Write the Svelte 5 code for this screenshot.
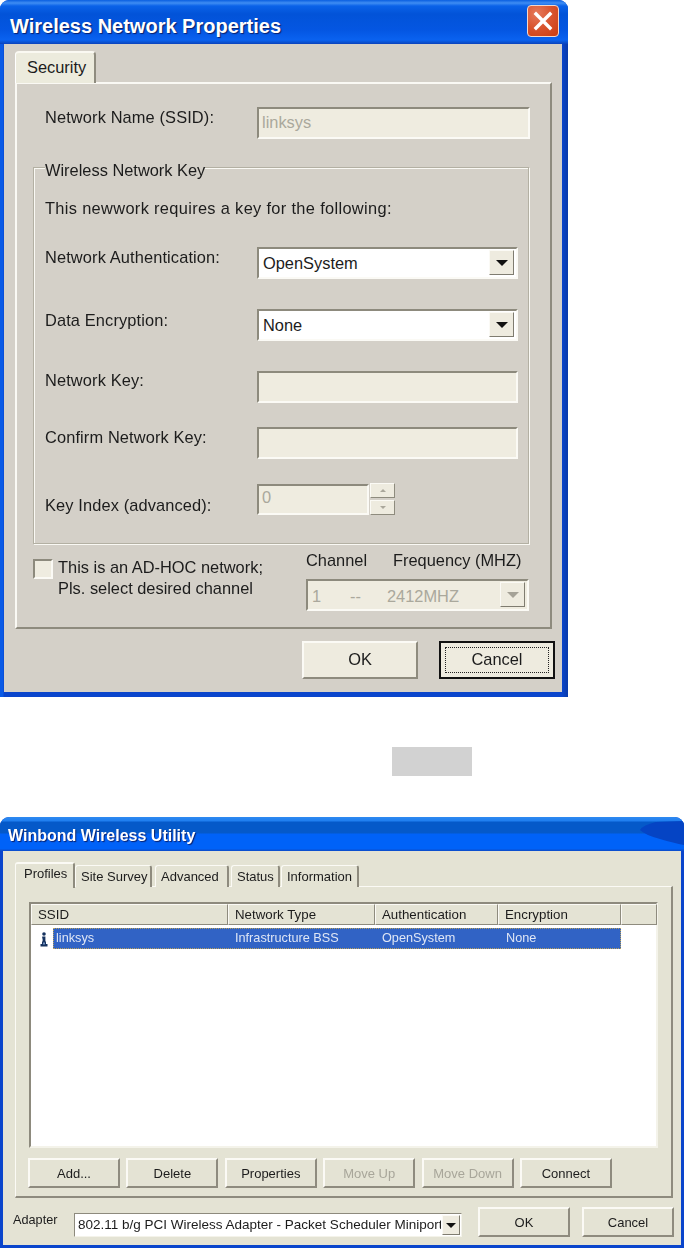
<script>
  const tabs = [
    { label: 'Site Survey', w: 77, gap: 3 },
    { label: 'Advanced', w: 74, gap: 2 },
    { label: 'Status', w: 49, gap: 1 },
    { label: 'Information', w: 78, gap: 0 }
  ];
  const cols = ['SSID', 'Network Type', 'Authentication', 'Encryption', ''];
  const actions = [
    { label: 'Add...', off: false },
    { label: 'Delete', off: false },
    { label: 'Properties', off: false },
    { label: 'Move Up', off: true },
    { label: 'Move Down', off: true },
    { label: 'Connect', off: false }
  ];
</script>

<div class="page">
  <section class="win one">
    <header class="title">
      <h1>Wireless Network Properties</h1>
      <button class="close" aria-label="Close">
        <svg viewBox="0 0 20 20" width="20" height="20"><path d="M3 3 L17 17 M17 3 L3 17" stroke="#fff" stroke-width="3.4" stroke-linecap="square" fill="none"/></svg>
      </button>
    </header>
    <div class="body">
      <div class="tab-one">Security</div>
      <div class="panel-one">
        <div class="row ssid">
          <span class="lab">Network Name (SSID):</span>
          <div class="field w273 off">linksys</div>
        </div>
        <div class="group">
          <div class="legend">Wireless Network Key</div>
          <p class="lead">This newwork requires a key for the following:</p>
          <div class="row r-auth">
            <span class="lab">Network Authentication:</span>
            <div class="field w261 sel">OpenSystem<span class="drop"><i></i></span></div>
          </div>
          <div class="row r-enc">
            <span class="lab">Data Encryption:</span>
            <div class="field w261 sel">None<span class="drop"><i></i></span></div>
          </div>
          <div class="row r-key">
            <span class="lab">Network Key:</span>
            <div class="field w261 off"></div>
          </div>
          <div class="row r-conf">
            <span class="lab">Confirm Network Key:</span>
            <div class="field w261 off"></div>
          </div>
          <div class="row r-idx">
            <span class="lab idx">Key Index (advanced):</span>
            <div class="field w112 off">0</div>
            <div class="spin">
              <span><i class="up"></i></span>
              <span><i class="down"></i></span>
            </div>
          </div>
        </div>
        <div class="adhoc">
          <span class="check"></span>
          <p class="adhoc-text">This is an AD-HOC network;<br />Pls. select desired channel</p>
          <div class="chan">
            <div class="chan-head"><span>Channel</span><span>Frequency (MHZ)</span></div>
            <div class="field w223 off dis">
              <span class="c1">1</span><span class="c2">--</span><span class="c3">2412MHZ</span>
              <span class="drop"><i class="gray"></i></span>
            </div>
          </div>
        </div>
      </div>
      <div class="foot-one">
        <button class="btn big">OK</button>
        <button class="btn big focus"><span>Cancel</span></button>
      </div>
    </div>
  </section>

  <div class="chip"></div>

  <section class="win two">
    <header class="title2">
      <svg class="blob" viewBox="0 0 44 24" width="44" height="24" aria-hidden="true">
        <path d="M44 0 L16 1 Q3 4 0 9 Q5 14 20 18 Q34 22 44 24 Z" fill="#0544c4"/>
      </svg>
      <h2>Winbond Wireless Utility</h2>
    </header>
    <div class="body2">
      <div class="tabs">
        <div class="tab active">Profiles</div>
        {#each tabs as t}
          <div class="tab" style="width:{t.w}px;margin-right:{t.gap}px">{t.label}</div>
        {/each}
      </div>
      <div class="panel-two">
        <div class="list">
          <div class="heads">
            {#each cols as c}<div class="head">{c}</div>{/each}
          </div>
          <div class="item">
            <svg class="ico" viewBox="0 0 8 15" width="8" height="15" aria-hidden="true">
              <circle cx="4" cy="2" r="1.8" fill="#16335f"/>
              <path d="M2.2 4.6 H5.4 V9.5 H6 V12 H7.5 V14.6 H0.5 V12 H2 V9.5 H2.6 V6.4 H2.2 Z" fill="#16335f"/>
              <path d="M3 10.5 H5 V12.5 H3 Z" fill="#6f8fc0"/>
            </svg>
            <div class="sel-row">
              <span class="a">linksys</span>
              <span class="b">Infrastructure BSS</span>
              <span class="c">OpenSystem</span>
              <span class="d">None</span>
            </div>
          </div>
        </div>
        <div class="actions">
          {#each actions as a}
            <button class="btn small" class:muted={a.off}>{a.label}</button>
          {/each}
        </div>
      </div>
      <div class="foot-two">
        <span class="adapter">Adapter</span>
        <div class="combo"><span class="combo-text">802.11 b/g PCI Wireless Adapter - Packet Scheduler Miniport</span><span class="drop small-drop"><i></i></span></div>
        <button class="btn small ok">OK</button>
        <button class="btn small">Cancel</button>
      </div>
    </div>
  </section>
</div>

<style>
  :global(body) { margin: 0; background: #fff; }
  * { box-sizing: border-box; }
  .page { width: 684px; height: 1248px; overflow: hidden; font-family: "Liberation Sans", Arial, sans-serif; color: #1c1c1c; display: flex; flex-direction: column; align-items: flex-start; filter: blur(.35px); }
  p, h1, h2 { margin: 0; font-weight: normal; }
  button { font-family: inherit; margin: 0; padding: 0; }

  .win { background: #0a49d8; display: flex; flex-direction: column; }
  .one { width: 568px; height: 697px; border-radius: 9px 9px 0 0; font-size: 16.4px; line-height: 18px; padding: 0 6px 5px 4px; background: linear-gradient(90deg, #0a5ae6 0, #0a5ae6 3px, #0a45cc 4px, #0a45cc 562px, #0a3aa8 568px); }
  .title { height: 44px; margin: 0 -6px 0 -4px; padding: 0 9px 0 10px; display: flex; align-items: center; justify-content: space-between; border-radius: 9px 9px 0 0; background: linear-gradient(180deg, #0a5fe0 0, #3f8df3 3px, #0a62e8 6px, #0253d8 14px, #0456e2 30px, #0a62f0 40px, #0a4cc8 43px, #0a3fbc 44px); }
  h1 { color: #fff; font: bold 20px/24px "Liberation Sans", Arial, sans-serif; text-shadow: 1px 1px 1px #0a1f6a; padding-top: 8px; }
  .close { width: 32px; height: 32px; margin-top: -3px; border: 1.5px solid #f3d8cc; border-radius: 4px; background: radial-gradient(circle at 30% 25%, #e67a5c 0, #d8532d 50%, #cc3c10 100%); display: flex; align-items: center; justify-content: center; }

  .body { flex: 1; background: #d4d0c8; padding: 7px 10px 0 11px; display: flex; flex-direction: column; }
  .tab-one { width: 81px; height: 32px; margin-bottom: -1px; position: relative; z-index: 1; background: #ecebdd; border-radius: 4px 4px 0 0; border-top: 2px solid #faf9f2; border-left: 1px solid #fff; border-right: 2px solid #8f8c7f; padding: 5px 0 0 11px; }
  .panel-one { width: 537px; height: 547px; border: 2px solid; border-color: #faf9f4 #8e8b7e #8e8b7e #faf9f4; padding: 0 0 0 16px; }

  .row { display: flex; align-items: flex-start; padding-left: 11px; }
  .lab { width: 212px; flex: none; letter-spacing: .12px; white-space: nowrap; }
  .ssid { margin-top: 23px; padding-left: 12px; }
  .ssid .lab { margin-top: 1px; }
  .ssid .field { padding-top: 4px; }

  .field { height: 32px; border: 2px solid; border-color: #8d8a7d #fbfaf5 #fbfaf5 #8d8a7d; background: #efece0; padding: 5px 0 0 3px; position: relative; display: flex; align-items: flex-start; }
  .off { color: #aaa89c; }
  .w273 { width: 273px; }
  .w261 { width: 261px; }
  .w112 { width: 112px; height: 31px; padding-top: 2px; }
  .w223 { width: 223px; }
  .sel { background: #fff; color: #1c1c1c; padding-left: 4px; }
  .drop { position: absolute; right: 2px; top: 1px; width: 25px; height: 25px; background: #eeebdf; border: 1px solid; border-color: #fbfaf5 #7f7c70 #7f7c70 #fbfaf5; display: flex; align-items: center; justify-content: center; }
  .drop i { width: 0; height: 0; border: 6px solid transparent; border-top: 6px solid #111; border-bottom: 0; }
  .drop i.gray { border-top-color: #a5a297; }

  .group { width: 496px; height: 377px; margin-top: 28px; border: 1px solid #b3b0a3; box-shadow: 1px 1px 0 #faf9f4, inset 1px 1px 0 #faf9f4; }
  .legend { width: fit-content; margin: -7px 0 0 11px; background: #d4d0c8; line-height: 18px; }
  .lead { margin: 20px 0 0 11px; letter-spacing: .33px; white-space: nowrap; }
  .r-auth { margin-top: 30px; }
  .r-auth .lab { margin-top: 1px; }
  .r-enc { margin-top: 30px; }
  .r-enc .lab { margin-top: 2px; }
  .r-key { margin-top: 30px; }
  .r-key .lab { margin-top: 0; }
  .r-conf { margin-top: 24px; }
  .r-conf .lab { margin-top: 1px; }
  .r-idx { margin-top: 25px; }
  .idx { margin-top: 12px; }
  .spin { margin: -1px 0 0 1px; display: flex; flex-direction: column; gap: 2px; }
  .spin span { width: 25px; height: 15px; background: #eeebdf; border: 1px solid; border-color: #fbfaf5 #8e8b7e #8e8b7e #fbfaf5; display: flex; align-items: center; justify-content: center; }
  .spin i { width: 0; height: 0; border: 3px solid transparent; }
  .spin i.up { border-top: 0; border-bottom: 3px solid #aaa79b; }
  .spin i.down { border-bottom: 0; border-top: 3px solid #aaa79b; }

  .adhoc { display: flex; align-items: flex-start; margin-top: 7px; }
  .check { width: 20px; height: 20px; margin-top: 8px; flex: none; background: #efece0; border: 2px solid; border-color: #8d8a7d #fbfaf5 #fbfaf5 #8d8a7d; }
  .adhoc-text { margin: 6px 0 0 5px; width: 248px; line-height: 20.5px; flex: none; }
  .chan-head { display: flex; height: 28px; }
  .chan-head span:first-child { width: 87px; }
  .dis { padding: 6px 0 0 4px; }
  .c1 { width: 38px; } .c2 { width: 37px; }

  .foot-one { display: flex; padding-left: 287px; margin-top: 12px; gap: 21px; }
  .btn { background: #eeebdf; color: #1c1c1c; border: 2px solid; border-color: #fbfaf5 #8e8b7e #8e8b7e #fbfaf5; font-size: inherit; flex: none; }
  .big { width: 116px; height: 38px; font-size: 16.4px; padding-bottom: 2px; }
  .focus { border: 2px solid #111; padding: 4px; display: flex; }
  .focus span { flex: 1; border: 1px dotted #222; display: flex; align-items: center; justify-content: center; padding-bottom: 1px; }

  .chip { width: 80px; height: 29px; margin: 50px 0 0 392px; background: #d2d2d2; }

  .two { width: 684px; height: 431px; margin-top: 41px; border-radius: 9px 9px 0 0; font-size: 12.7px; line-height: 15px; padding: 0 3px 3px 3px; background: #0a45cc; }
  .title2 { height: 34px; margin: 0 -3px; padding: 9px 0 0 8px; position: relative; border-radius: 9px 9px 0 0; overflow: hidden; background: linear-gradient(180deg, #2f8af0 0, #1f7ef0 4px, #0559c9 5px, #0559c9 16px, #0062f8 17px, #0062f8 32px, #0a4fd0 33px); }
  h2 { color: #fff; font: bold 16px/20px "Liberation Sans", Arial, sans-serif; text-shadow: 1px 1px 1px #0a1f6a; position: relative; }
  .blob { position: absolute; right: 0; top: 4px; }

  .body2 { flex: 1; background: #e4e3d4; padding: 11px 0 0 12px; display: flex; flex-direction: column; }
  .tabs { display: flex; align-items: flex-end; height: 26px; margin-bottom: -2px; position: relative; z-index: 1; font-size: 13px; }
  .tab { height: 22px; margin-bottom: 1px; background: #e4e3d4; border-top: 1px solid #fbfaf5; border-left: 1px solid #fbfaf5; border-right: 2px solid #8e8b7e; border-radius: 3px 3px 0 0; padding: 3px 0 0 5px; white-space: nowrap; }
  .tab.active { width: 60px; height: 26px; margin-bottom: 0; margin-right: 0; padding: 2px 0 0 8px; border-top: 2px solid #fbfaf5; }
  .panel-two { width: 658px; height: 312px; border: 1px solid; border-width: 1px 2px 2px 1px; border-color: #fbfaf5 #8e8b7e #8e8b7e #fbfaf5; padding: 15px 0 0 13px; }
  .list { width: 629px; height: 246px; background: #fff; border: 2px solid; border-color: #8d8a7d #f4f3ea #f4f3ea #8d8a7d; }
  .heads { display: grid; grid-template-columns: 197px 147px 123px 123px 36px; height: 21px; background: #e4e3d4; font-size: 13.3px; }
  .head { border: 1px solid; border-color: #fbfaf5 #8e8b7e #8e8b7e #fbfaf5; padding: 2px 0 0 6px; white-space: nowrap; }
  .item { display: flex; margin-top: 3px; padding-left: 9px; }
  .ico { margin: 4px 5px 0 0; flex: none; }
  .sel-row { width: 568px; height: 21px; background: #3163c5; color: #dfe6f5; outline: 1px dotted #b9a15a; outline-offset: -1px; display: flex; padding: 3px 0 0 3px; white-space: nowrap; }
  .a { width: 179px; } .b { width: 147px; } .c { width: 124px; }

  .actions { display: flex; gap: 6.4px; margin: 10px 0 0 -1px; }
  .small { width: 92px; height: 30px; font-size: 13px; }
  .muted { color: #a8a69a; background: #e4e3d4; }
  .actions .small { background: #e4e3d4; }
  .foot-two { display: flex; align-items: flex-start; margin-top: 9px; }
  .foot-two .small { background: #e4e3d4; }
  .adapter { width: 61px; margin: 6px 0 0 -2px; flex: none; }
  .combo { width: 388px; height: 24px; margin-top: 6px; margin-right: 16px; background: #fff; position: relative; border: 1px solid; border-color: #8d8a7d #f4f3ea #f4f3ea #8d8a7d; padding: 3px 0 0 3px; overflow: hidden; white-space: nowrap; font-size: 13.5px; }
  .combo-text { display: block; width: 363px; overflow: hidden; }
  .small-drop { width: 18px; height: 20px; right: 1px; top: 1px; }
  .small-drop i { border-width: 5px; border-top-width: 5px; }
  .ok { margin-right: 12px; }
</style>
